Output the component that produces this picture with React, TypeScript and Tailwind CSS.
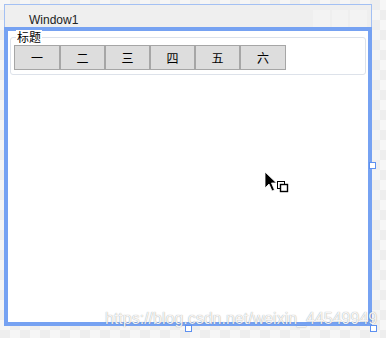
import React from "react";

const tabs = ["一", "二", "三", "四", "五", "六"];

export default function App() {
  return (
    <div className="relative w-[386px] h-[338px] overflow-hidden bg-[#f2f2f2] bg-[image:repeating-conic-gradient(#eeeeee_0_25%,#f6f6f6_0_50%)] bg-[length:20px_20px] pt-[4px] pl-[4px] font-['Liberation_Sans','Noto_Sans_CJK_SC',sans-serif]">
      {/* Window frame */}
      <div className="w-[368px] flex flex-col">
        <div className="h-[23px] flex border-t border-l border-r border-[#a3c0f3] bg-[#efefef]">
          <span className="mt-[9px] ml-[24px] text-[12px] leading-[12px] text-[#222222]">
            Window1
          </span>
          <div className="ml-auto mr-[4px] self-end flex gap-[2px]">
            <div className="w-[17px] h-[17px] bg-[#f3f3f3]" />
            <div className="w-[16px] h-[17px] bg-[#f3f3f3]" />
            <div className="w-[17px] h-[17px] bg-[#f3f3f3]" />
          </div>
        </div>

        {/* Client area (selected) */}
        <div className="h-[299px] border-4 border-[#76a2f2] bg-white">
          <div className="relative mx-[2px] mt-[6px] border border-[#dde2ea] rounded-[3px] pt-[7px] pb-[4px] pl-[3px]">
            <span className="absolute -top-[8px] left-[5px] bg-white px-[1px] text-[12px] leading-[14px] text-black font-['Noto_Sans_CJK_SC',sans-serif]">
              标题
            </span>
            <div className="flex">
              {tabs.map((t, i) => (
                <div
                  key={t}
                  className={
                    "h-[25px] flex items-center justify-center border border-[#a6a6a6] bg-[#dddddd] text-[12px] leading-none text-black font-['Noto_Sans_CJK_SC',sans-serif] " +
                    (i === 0 || i === 5 ? "w-[46px]" : "w-[45px]")
                  }
                >
                  {t}
                </div>
              ))}
            </div>
          </div>
        </div>
      </div>

      {/* Resize handles */}
      <div className="absolute left-[369px] top-[162px] w-[7px] h-[7px] border border-[#5d90f0] bg-white" />
      <div className="absolute left-[185px] top-[325px] w-[7px] h-[7px] border border-[#5d90f0] bg-white" />
      <div className="absolute left-[370px] top-[325px] w-[7px] h-[7px] border border-[#5d90f0] bg-white" />

      {/* Cursor */}
      <svg className="absolute left-[264px] top-[171px]" width="26" height="22" viewBox="0 0 26 22">
        <path d="M1 1 L1 17 L5 13 L8 20 L10.5 19 L7.5 12 L12.5 12 Z" fill="#000" stroke="#fff" strokeWidth="0.8" />
        <rect x="13.5" y="10.5" width="7" height="7" fill="#fff" stroke="#000" />
        <rect x="16.5" y="13.5" width="7" height="7" fill="#fff" stroke="#000" strokeWidth="1.4" />
      </svg>

      {/* Watermark */}
      <span className="absolute left-[105px] top-[311px] text-[16px] leading-[16px] text-white/90 [text-shadow:0_0_1px_rgba(0,0,0,0.45)] whitespace-nowrap">
        https://blog.csdn.net/weixin_44549949
      </span>
    </div>
  );
}
